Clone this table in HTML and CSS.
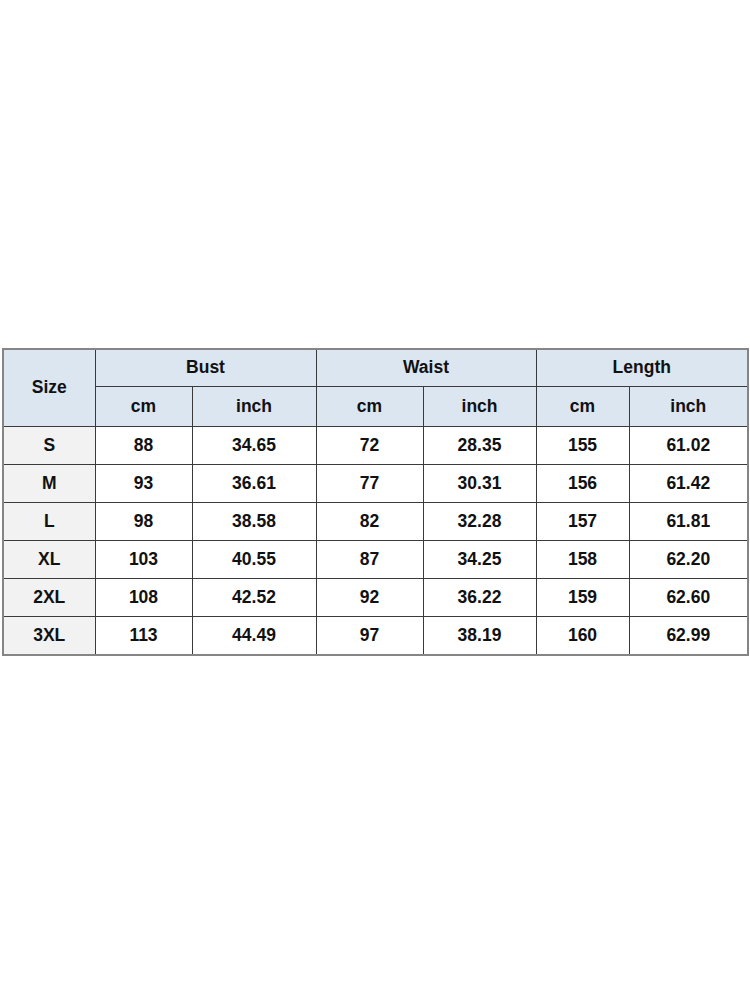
FILE: index.html
```html
<!DOCTYPE html>
<html>
<head>
<meta charset="utf-8">
<link rel="stylesheet" href="styles.css">
</head>
<body>
<div class="page">
  <table class="size-table">
    <colgroup>
      <col class="c-size">
      <col class="c-bcm">
      <col class="c-bin">
      <col class="c-wcm">
      <col class="c-win">
      <col class="c-lcm">
      <col class="c-lin">
    </colgroup>
    <thead>
      <tr class="h1">
        <th rowspan="2">Size</th>
        <th colspan="2">Bust</th>
        <th colspan="2">Waist</th>
        <th colspan="2">Length</th>
      </tr>
      <tr class="h2">
        <th>cm</th><th>inch</th>
        <th>cm</th><th>inch</th>
        <th>cm</th><th>inch</th>
      </tr>
    </thead>
    <tbody>
      <tr><td class="sz">S</td><td>88</td><td>34.65</td><td>72</td><td>28.35</td><td>155</td><td>61.02</td></tr>
      <tr><td class="sz">M</td><td>93</td><td>36.61</td><td>77</td><td>30.31</td><td>156</td><td>61.42</td></tr>
      <tr><td class="sz">L</td><td>98</td><td>38.58</td><td>82</td><td>32.28</td><td>157</td><td>61.81</td></tr>
      <tr><td class="sz">XL</td><td>103</td><td>40.55</td><td>87</td><td>34.25</td><td>158</td><td>62.20</td></tr>
      <tr><td class="sz">2XL</td><td>108</td><td>42.52</td><td>92</td><td>36.22</td><td>159</td><td>62.60</td></tr>
      <tr><td class="sz">3XL</td><td>113</td><td>44.49</td><td>97</td><td>38.19</td><td>160</td><td>62.99</td></tr>
    </tbody>
  </table>
</div>
</body>
</html>
```
FILE: styles.css
```css
html, body {
  margin: 0;
  padding: 0;
  background: #ffffff;
}
.page {
  width: 750px;
  height: 1000px;
  padding: 348px 0 0 2px;
  box-sizing: border-box;
}
.size-table {
  border-collapse: collapse;
  table-layout: fixed;
  width: 745px;
  border: 2px solid #858585;
  font-family: "Liberation Sans", Arial, sans-serif;
  font-weight: bold;
  font-size: 17.5px;
  color: #111111;
}
.c-size { width: 92px; }
.c-bcm { width: 97px; }
.c-bin { width: 124px; }
.c-wcm { width: 107px; }
.c-win { width: 113px; }
.c-lcm { width: 93px; }
.c-lin { width: 119px; }
.size-table th,
.size-table td {
  border: 1px solid #3a3a3a;
  text-align: center;
  vertical-align: middle;
  padding: 0;
  font-weight: bold;
}
.size-table th {
  background: #dce6f1;
}
.h1 { height: 37px; }
.h2 { height: 40px; }
.size-table tbody tr { height: 38px; }
.size-table tbody tr:last-child { height: 39px; }
.size-table td.sz {
  background: #f2f2f2;
}
```
